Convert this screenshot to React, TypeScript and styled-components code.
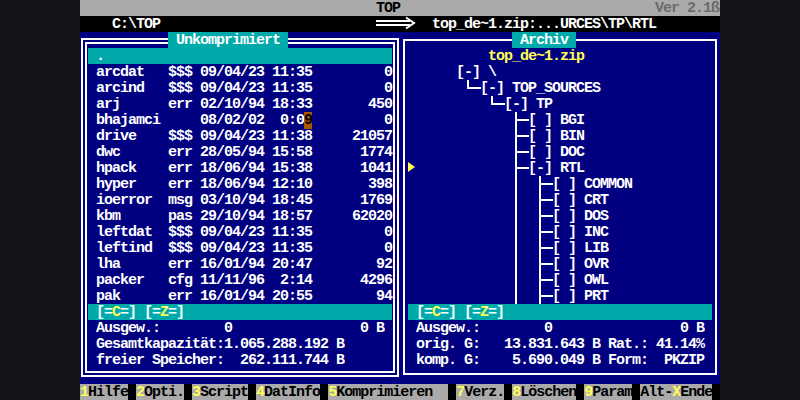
import React from 'react';
import styled, { createGlobalStyle, css } from 'styled-components';

const GlobalStyle = createGlobalStyle`
  html, body {
    margin: 0;
    padding: 0;
    background: #121418;
  }
`;

/**
 * Text-mode screen: 80 x 25 cells, 8 x 16 px each.
 */
const Screen = styled.div`
  width: 640px;
  height: 400px;
  margin: 0 auto;
  display: flex;
  flex-direction: column;
  background: #000080;
  color: #fff;
  font-family: "Liberation Mono", "DejaVu Sans Mono", monospace;
  font-weight: 700;
  font-size: 15px;
  letter-spacing: -1px;
  line-height: 18px;
  white-space: pre;
`;

const TitleBar = styled.header`
  display: grid;
  grid-template-columns: 296px 1fr auto;
  grid-template-rows: 16px;
  height: 16px;
  background: #aaa;
  color: #000;
`;

const AppName = styled.span`
  grid-column: 2;
`;

const Version = styled.span`
  grid-column: 3;
  padding-right: 1px;
  color: #6c6c6c;
`;

const PathBar = styled.div`
  display: grid;
  grid-template-columns: 296px 40px 1fr;
  grid-template-rows: 16px;
  height: 16px;
  background: #000;
`;

const LocalPath = styled.span`
  padding-left: 32px;
`;

const ArchivePath = styled.span`
  padding-left: 16px;
`;

const Panels = styled.main`
  display: grid;
  grid-template-columns: 320px 320px;
  height: 352px;
`;

const Panel = styled.section<{ $double?: boolean }>`
  position: relative;
  padding: ${p => (p.$double ? '6px 1px 7px 1px' : '7px 3px 9px 3px')};
`;

const Frame = styled.div<{ $double?: boolean }>`
  box-sizing: border-box;
  height: 100%;
  border: ${p => (p.$double ? '6px double #fff' : '2px solid #fff')};
  padding: ${p => (p.$double ? '4px 1px 3px 1px' : '7px 3px 5px 3px')};
`;

const PanelTitle = styled.span<{ $col: number }>`
  position: absolute;
  top: 0;
  left: ${p => p.$col * 8}px;
  height: 16px;
  padding: 0 8px;
  background: #00aaaa;
  color: #fff;
`;

const Body = styled.div`
  display: flex;
  flex-direction: column;
  width: 304px;
  height: 320px;
`;

const Line = styled.div<{ $yellow?: boolean; $indent?: number }>`
  flex: none;
  height: 16px;
  padding-left: ${p => (p.$indent ?? 1) * 8}px;
  color: ${p => (p.$yellow ? '#ffff55' : '#fff')};
`;

const Bar = styled(Line)`
  background: #00aaaa;
`;

const Hot = styled.span`
  color: #ffff55;
`;

const FileList = styled.div`
  display: flex;
  flex-direction: column;
`;

const FileRow = styled.div`
  display: grid;
  grid-template-columns: 8px 72px 32px 72px 40px 80px;
  grid-template-rows: 16px;
  height: 16px;
`;

const Right = styled.span`
  text-align: right;
`;

const Cursor = styled.span`
  background: #aa5500;
  color: #000;
`;

const Tree = styled.div`
  display: flex;
  flex-direction: column;
`;

const TreeRow = styled.div`
  display: flex;
  height: 16px;
`;

const Marker = styled.span`
  flex: none;
  width: 8px;
  height: 16px;
  display: flex;
  align-items: center;
`;

const Gap = styled.span<{ $w: number }>`
  flex: none;
  width: ${p => p.$w}px;
`;

const Guide = styled.span<{ $line?: boolean }>`
  flex: none;
  position: relative;
  width: 24px;
  ${p =>
    p.$line &&
    css`
      &::before {
        content: '';
        position: absolute;
        left: 3px;
        top: 0;
        width: 2px;
        height: 16px;
        background: #fff;
      }
    `}
`;

const Joint = styled.span<{ $last?: boolean }>`
  flex: none;
  position: relative;
  width: 16px;

  &::before {
    content: '';
    position: absolute;
    left: 3px;
    top: 0;
    width: 2px;
    height: ${p => (p.$last ? '9px' : '16px')};
    background: #fff;
  }

  &::after {
    content: '';
    position: absolute;
    left: 3px;
    right: -1px;
    top: 7px;
    height: 2px;
    background: #fff;
  }
`;

const KeyBar = styled.footer`
  display: flex;
  gap: 8px;
  height: 16px;
  background: #000;
`;

const Key = styled.span`
  height: 16px;
  background: #aaa;
  color: #000;
`;

interface IFile {
  name: string;
  ext: string;
  date: string;
  time: string;
  size: string;
  cursor?: boolean;
}

const files: IFile[] = [
  { name: 'arcdat', ext: '$$$', date: '09/04/23', time: '11:35', size: '0' },
  { name: 'arcind', ext: '$$$', date: '09/04/23', time: '11:35', size: '0' },
  { name: 'arj', ext: 'err', date: '02/10/94', time: '18:33', size: '450' },
  { name: 'bhajamci', ext: '', date: '08/02/02', time: '0:09', size: '0', cursor: true },
  { name: 'drive', ext: '$$$', date: '09/04/23', time: '11:38', size: '21057' },
  { name: 'dwc', ext: 'err', date: '28/05/94', time: '15:58', size: '1774' },
  { name: 'hpack', ext: 'err', date: '18/06/94', time: '15:38', size: '1041' },
  { name: 'hyper', ext: 'err', date: '18/06/94', time: '12:10', size: '398' },
  { name: 'ioerror', ext: 'msg', date: '03/10/94', time: '18:45', size: '1769' },
  { name: 'kbm', ext: 'pas', date: '29/10/94', time: '18:57', size: '62020' },
  { name: 'leftdat', ext: '$$$', date: '09/04/23', time: '11:35', size: '0' },
  { name: 'leftind', ext: '$$$', date: '09/04/23', time: '11:35', size: '0' },
  { name: 'lha', ext: 'err', date: '16/01/94', time: '20:47', size: '92' },
  { name: 'packer', ext: 'cfg', date: '11/11/96', time: '2:14', size: '4296' },
  { name: 'pak', ext: 'err', date: '16/01/94', time: '20:55', size: '94' },
];

interface INode {
  level: number;
  name: string;
  open?: boolean;
  last?: boolean;
  current?: boolean;
  guides?: number[];
}

const nodes: INode[] = [
  { level: 0, name: '\\', open: true },
  { level: 1, name: 'TOP_SOURCES', open: true, last: true },
  { level: 2, name: 'TP', open: true, last: true },
  { level: 3, name: 'BGI' },
  { level: 3, name: 'BIN' },
  { level: 3, name: 'DOC' },
  { level: 3, name: 'RTL', open: true, current: true },
  ...['COMMON', 'CRT', 'DOS', 'INC', 'LIB', 'OVR', 'OWL', 'PRT'].map(name => ({
    level: 4,
    name,
    guides: [3],
  })),
];

const keys: [string, string][] = [
  ['1', 'Hilfe'],
  ['2', 'Opti.'],
  ['3', 'Script'],
  ['4', 'DatInfo'],
  ['5', 'Komprimieren  '],
  ['7', 'Verz.'],
  ['8', 'Löschen'],
  ['9', 'Param'],
];

function Arrow() {
  return (
    <svg width="40" height="16" viewBox="0 0 40 16">
      <rect x="0" y="4" width="34" height="2" fill="#fff" />
      <rect x="0" y="8" width="34" height="2" fill="#fff" />
      <polyline points="30,1.5 38,7 30,12.5" fill="none" stroke="#fff" strokeWidth="2" />
    </svg>
  );
}

function FileEntry({ file }: { file: IFile }) {
  const time = file.cursor ? (
    <>
      {file.time.slice(0, -1)}
      <Cursor>{file.time.slice(-1)}</Cursor>
    </>
  ) : (
    file.time
  );

  return (
    <FileRow>
      <span />
      <span>{file.name}</span>
      <span>{file.ext}</span>
      <span>{file.date}</span>
      <Right>{time}</Right>
      <Right>{file.size}</Right>
    </FileRow>
  );
}

function TreeNode({ node }: { node: INode }) {
  const guides = node.guides || [];
  const units = [];
  for (let i = 0; i < node.level; i++) {
    units.push(<Guide key={i} $line={guides.includes(i)} />);
  }

  return (
    <TreeRow>
      <Marker>
        {node.current && (
          <svg width="8" height="16" viewBox="0 0 8 16">
            <polygon points="0,2 7,7 0,12" fill="#ffff55" />
          </svg>
        )}
      </Marker>
      <Gap $w={24} />
      {units}
      {node.level === 0 ? <Gap $w={16} /> : <Joint $last={node.last} />}
      <span>{`[${node.open ? '-' : ' '}] ${node.name}`}</span>
    </TreeRow>
  );
}

function DriveBar() {
  return (
    <Bar>
      [=<Hot>C</Hot>=] [=<Hot>Z</Hot>=]
    </Bar>
  );
}

export default function App(): React.ReactElement {
  return (
    <>
      <GlobalStyle />
      <Screen>
        <TitleBar>
          <AppName>TOP</AppName>
          <Version>Ver 2.1ß</Version>
        </TitleBar>

        <PathBar>
          <LocalPath>C:\TOP</LocalPath>
          <Arrow />
          <ArchivePath>top_de~1.zip:...URCES\TP\RTL</ArchivePath>
        </PathBar>

        <Panels>
          <Panel $double>
            <Frame $double>
              <Body>
                <Bar>.</Bar>
                <FileList>
                  {files.map(f => (
                    <FileEntry key={f.name} file={f} />
                  ))}
                </FileList>
                <DriveBar />
                <Line>{'Ausgew.:        0                0 B'}</Line>
                <Line>{'Gesamtkapazität:1.065.288.192 B'}</Line>
                <Line>{'freier Speicher:  262.111.744 B'}</Line>
              </Body>
            </Frame>
            <PanelTitle $col={11}>Unkomprimiert</PanelTitle>
          </Panel>

          <Panel>
            <Frame>
              <Body>
                <Line $yellow $indent={10}>top_de~1.zip</Line>
                <Tree>
                  {nodes.map(n => (
                    <TreeNode key={n.name} node={n} />
                  ))}
                </Tree>
                <DriveBar />
                <Line>{'Ausgew.:        0                0 B'}</Line>
                <Line>{'orig. G:   13.831.643 B Rat.: 41.14%'}</Line>
                <Line>{'komp. G:    5.690.049 B Form:  PKZIP'}</Line>
              </Body>
            </Frame>
            <PanelTitle $col={14}>Archiv</PanelTitle>
          </Panel>
        </Panels>

        <KeyBar>
          {keys.map(([n, label]) => (
            <Key key={n}>
              <Hot>{n}</Hot>
              {label}
            </Key>
          ))}
          <Key>
            Alt-<Hot>X</Hot>Ende
          </Key>
        </KeyBar>
      </Screen>
    </>
  );
}
